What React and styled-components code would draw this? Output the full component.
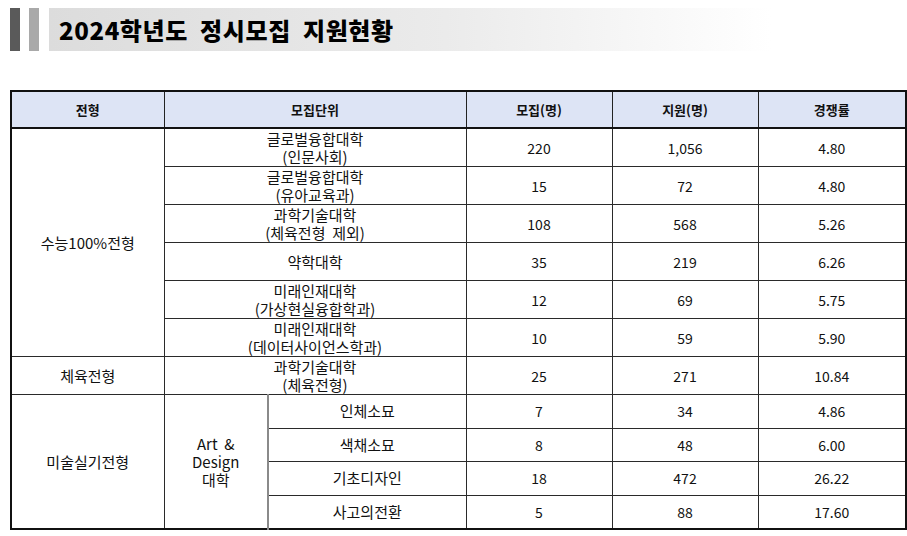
import React from "react";
import styled, { createGlobalStyle } from "styled-components";

const GlobalStyle = createGlobalStyle`
  body {
    margin: 0;
    background: #fff;
    font-family: "Noto Sans CJK KR", "Noto Sans", sans-serif;
    color: #111;
  }
`;

const Page = styled.div`
  width: 907px;
  height: 536px;
  padding: 8px 2px 0 10px;
  box-sizing: border-box;
`;

const TitleBar = styled.div`
  display: flex;
  align-items: stretch;
  height: 43px;
  gap: 9px;
`;

const Bar = styled.div`
  width: 10px;
  background: ${(p) => p.$color};
`;

const Banner = styled.div`
  width: 712px;
  margin-left: 1px;
  display: flex;
  align-items: center;
  padding-left: 10px;
  background: linear-gradient(to right, #dcdcdc 0%, #ebebeb 55%, #ffffff 100%);
`;

const Title = styled.h1`
  margin: 0;
  font-size: 24px;
  font-weight: 900;
  color: #000;
  white-space: pre;
  letter-spacing: 0.6px;
  line-height: 1;
`;

const Table = styled.table`
  margin-top: 39px;
  width: 895px;
  table-layout: fixed;
  border-collapse: collapse;
  border: 2px solid #111;
  font-size: 14px;
  line-height: 18px;
`;

const Th = styled.th`
  height: 35px;
  padding: 0;
  background: #dde4f5;
  font-size: 13px;
  font-weight: 700;
  text-align: center;
  border: 1px solid #222;
  border-bottom: 2px solid #111;
`;

const Td = styled.td`
  height: ${(p) => (p.$short ? "32.5px" : "37px")};
  padding: 0;
  text-align: center;
  vertical-align: middle;
  font-weight: 400;
  font-size: ${(p) => (p.$ko ? "15px" : "14px")};
  border: 1px solid #2a2a2a;
  ${(p) => p.$softLeft && "border-left: 2px solid #8a8a8a;"}
`;

const Keep = styled.span`
  white-space: pre;
`;

const rows = [
  ["글로벌융합대학", "(인문사회)", "220", "1,056", "4.80"],
  ["글로벌융합대학", "(유아교육과)", "15", "72", "4.80"],
  ["과학기술대학", "(체육전형  제외)", "108", "568", "5.26"],
  ["약학대학", null, "35", "219", "6.26"],
  ["미래인재대학", "(가상현실융합학과)", "12", "69", "5.75"],
  ["미래인재대학", "(데이터사이언스학과)", "10", "59", "5.90"],
];

const artRows = [
  ["인체소묘", "7", "34", "4.86"],
  ["색채소묘", "8", "48", "6.00"],
  ["기초디자인", "18", "472", "26.22"],
  ["사고의전환", "5", "88", "17.60"],
];

const Unit = ({ name, sub }) => (
  <>
    {name}
    {sub && (
      <>
        <br />
        <Keep>{sub}</Keep>
      </>
    )}
  </>
);

export default function App() {
  return (
    <Page>
      <GlobalStyle />
      <TitleBar>
        <Bar $color="#5a5a5a" />
        <Bar $color="#a9a9a9" />
        <Banner>
          <Title>{"2024학년도  정시모집  지원현황"}</Title>
        </Banner>
      </TitleBar>

      <Table>
        <colgroup>
          <col style={{ width: 153 }} />
          <col style={{ width: 104 }} />
          <col style={{ width: 198 }} />
          <col style={{ width: 146 }} />
          <col style={{ width: 146 }} />
          <col style={{ width: 148 }} />
        </colgroup>
        <thead>
          <tr>
            <Th>전형</Th>
            <Th colSpan={2}>모집단위</Th>
            <Th>모집(명)</Th>
            <Th>지원(명)</Th>
            <Th>경쟁률</Th>
          </tr>
        </thead>
        <tbody>
          {rows.map(([name, sub, a, b, c], i) => (
            <tr key={i}>
              {i === 0 && (
                <Td rowSpan={rows.length} $ko>
                  수능100%전형
                </Td>
              )}
              <Td colSpan={2} $ko>
                <Unit name={name} sub={sub} />
              </Td>
              <Td>{a}</Td>
              <Td>{b}</Td>
              <Td>{c}</Td>
            </tr>
          ))}
          <tr>
            <Td $ko>체육전형</Td>
            <Td colSpan={2} $ko>
              <Unit name="과학기술대학" sub="(체육전형)" />
            </Td>
            <Td>25</Td>
            <Td>271</Td>
            <Td>10.84</Td>
          </tr>
          {artRows.map(([name, a, b, c], i) => (
            <tr key={name}>
              {i === 0 && (
                <>
                  <Td rowSpan={4} $short $ko>
                    미술실기전형
                  </Td>
                  <Td rowSpan={4} $short $ko>
                    <Keep>{"Art  &"}</Keep>
                    <br />
                    Design
                    <br />
                    대학
                  </Td>
                </>
              )}
              <Td $short $softLeft $ko>
                {name}
              </Td>
              <Td $short>{a}</Td>
              <Td $short>{b}</Td>
              <Td $short>{c}</Td>
            </tr>
          ))}
        </tbody>
      </Table>
    </Page>
  );
}
